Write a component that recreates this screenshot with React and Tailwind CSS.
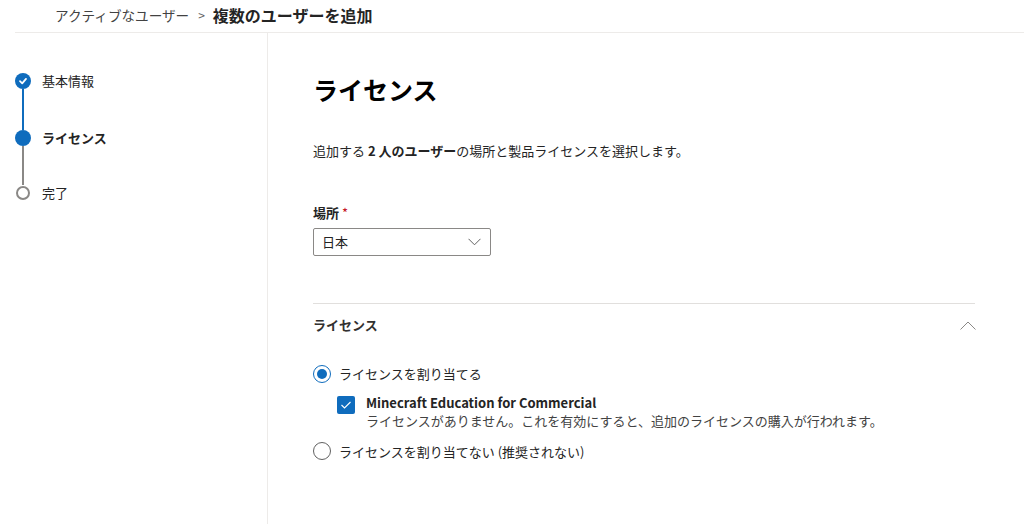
import React from "react";

const font = { fontFamily: '"Noto Sans CJK JP", "Noto Sans", sans-serif' };

function Step({ state, label, bold }) {
  return (
    <div className="flex items-center h-[16px]">
      <div className="w-[16px] h-[16px] flex items-center justify-center">
        {state === "done" && (
          <div className="w-[16px] h-[16px] rounded-full bg-[#0f6cbd] flex items-center justify-center">
            <svg width="10" height="10" viewBox="0 0 10 10">
              <path d="M2 5.2 L4.2 7.3 L8 2.9" fill="none" stroke="white" strokeWidth="1.8" strokeLinecap="round" strokeLinejoin="round" />
            </svg>
          </div>
        )}
        {state === "current" && <div className="w-[16px] h-[16px] rounded-full bg-[#0f6cbd]" />}
        {state === "todo" && <div className="w-[14px] h-[14px] rounded-full border-2 border-[#8a8886] bg-white" />}
      </div>
      <span className={"ml-[11px] text-[13px] text-[#242424] " + (bold ? "font-bold" : "")}>{label}</span>
    </div>
  );
}

export default function App() {
  return (
    <div className="w-[1024px] h-[524px] bg-white overflow-hidden text-[#242424]" style={font}>
      <div className="h-[32px] flex items-center pl-[55px] pb-[2px]">
        <span className="text-[13.6px] text-[#424242]">アクティブなユーザー</span>
        <span className="ml-[9px] mr-[8px] text-[#616161] text-[12px]">&gt;</span>
        <span className="text-[16px] font-bold text-[#242424]">複数のユーザーを追加</span>
      </div>
      <div className="ml-[15px] border-t border-[#edebe9] flex h-[492px]">
        <nav className="w-[253px] shrink-0 border-r border-[#edebe9] pt-[40px]">
          <Step state="done" label="基本情報" />
          <div className="ml-[7px] w-[2px] h-[41px] bg-[#0f6cbd]" />
          <Step state="current" label="ライセンス" bold />
          <div className="ml-[7px] w-[2px] h-[39px] bg-[#8a8886]" />
          <Step state="todo" label="完了" />
        </nav>
        <main className="flex-1 pl-[45px] pr-[49px] pt-[38px]">
          <h1 className="text-[25px] font-bold leading-[36px] text-black">ライセンス</h1>
          <p className="mt-[35px] text-[13px] leading-[18px]">
            追加する <span className="font-bold">2 人のユーザー</span>の場所と製品ライセンスを選択します。
          </p>
          <div className="mt-[44px] text-[13px] font-bold leading-[18px]">
            場所 <span className="text-[#c50f1f] font-normal">*</span>
          </div>
          <div className="mt-[6px] w-[178px] h-[28px] border border-[#8a8886] rounded-[2px] flex items-center justify-between pl-[8px] pr-[9px] text-[13px]">
            <span>日本</span>
            <svg width="13" height="8" viewBox="0 0 13 8">
              <path d="M0.5 0.8 L6.5 6.8 L12.5 0.8" fill="none" stroke="#616161" strokeWidth="1" />
            </svg>
          </div>
          <div className="mt-[47px] border-t border-[#e1dfdd]" />
          <div className="flex items-center justify-between h-[42px]">
            <span className="text-[13px] font-bold text-[#323130]">ライセンス</span>
            <svg width="16" height="9" viewBox="0 0 16 9" className="mr-[-1px]">
              <path d="M0.5 8.5 L8 1 L15.5 8.5" fill="none" stroke="#8a8886" strokeWidth="1" />
            </svg>
          </div>
          <div className="mt-[18px] flex items-center">
            <div className="w-[18px] h-[18px] rounded-full border border-[#0f6cbd] flex items-center justify-center">
              <div className="w-[10px] h-[10px] rounded-full bg-[#0f6cbd]" />
            </div>
            <span className="ml-[8px] text-[13px]">ライセンスを割り当てる</span>
          </div>
          <div className="mt-[10px] ml-[24px] flex items-start">
            <div className="w-[18px] h-[18px] mt-[2px] rounded-[2px] bg-[#0f6cbd] flex items-center justify-center">
              <svg width="12" height="10" viewBox="0 0 12 10">
                <path d="M1.5 5 L4.5 8 L10.5 2" fill="none" stroke="white" strokeWidth="1.1" />
              </svg>
            </div>
            <div className="ml-[11px] leading-[18px]">
              <div className="text-[13px] font-bold">Minecraft Education for Commercial</div>
              <div className="text-[13px] text-[#424242]">ライセンスがありません。これを有効にすると、追加のライセンスの購入が行われます。</div>
            </div>
          </div>
          <div className="mt-[12px] flex items-center">
            <div className="w-[18px] h-[18px] rounded-full border border-[#616161]" />
            <span className="ml-[8px] text-[13px]">ライセンスを割り当てない (推奨されない)</span>
          </div>
        </main>
      </div>
    </div>
  );
}
